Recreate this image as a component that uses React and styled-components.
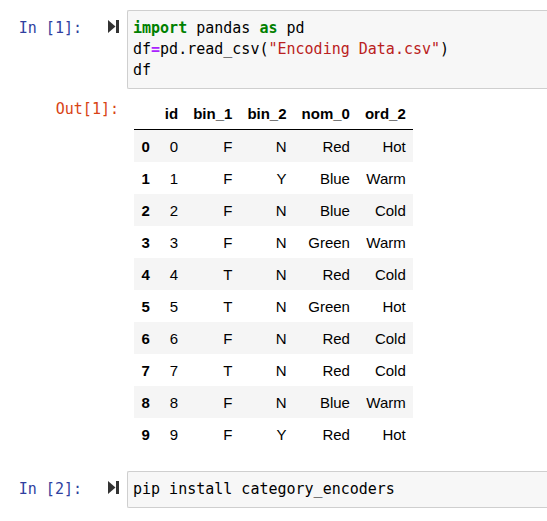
import React from "react";
import styled, { createGlobalStyle } from "styled-components";

const Global = createGlobalStyle`
  html, body { margin: 0; padding: 0; background: #fff; overflow: hidden; }
  body { width: 547px; height: 521px; }
`;

const Notebook = styled.div`
  width: 547px;
  padding-top: 10px;
  display: flex;
  flex-direction: column;
`;

const Cell = styled.div`
  display: flex;
  align-items: flex-start;
  margin-top: ${(p) => p.$mt || 0}px;
`;

const Prompt = styled.div`
  font-family: "DejaVu Sans Mono", monospace;
  font-size: 15px;
  line-height: 21px;
  color: ${(p) => (p.$out ? "#D84315" : "#303F9F")};
  width: ${(p) => p.$w}px;
  text-align: right;
  padding-top: ${(p) => p.$pt || 0}px;
  padding-right: ${(p) => p.$pr || 0}px;
  box-sizing: border-box;
  flex: none;
  white-space: pre;
`;

const RunButton = styled.div`
  flex: none;
  width: 45px;
  padding-left: 26px;
  padding-top: 10px;
  box-sizing: border-box;
  display: flex;
`;

const CodeBox = styled.div`
  flex: 1;
  min-width: 0;
  background: #f7f7f7;
  border: 1px solid #cfcfcf;
  border-right: none;
  border-radius: 2px 0 0 2px;
  padding: 7px 5px;
  font-family: "DejaVu Sans Mono", monospace;
  font-size: 15px;
  line-height: 21px;
  color: #000;
  white-space: pre;
  overflow: hidden;
`;

const Kw = styled.span`
  color: #008000;
  font-weight: bold;
`;
const Op = styled.span`
  color: #aa22ff;
  font-weight: bold;
`;
const Str = styled.span`
  color: #ba2121;
`;

const Output = styled.div`
  display: flex;
  align-items: flex-start;
  margin-top: 8px;
`;

const Table = styled.table`
  margin-left: 7px;
  border-collapse: collapse;
  border-spacing: 0;
  font-family: "Liberation Sans", Arial, sans-serif;
  font-size: 15px;
  color: #000;
`;

const Th = styled.th`
  text-align: right;
  font-weight: bold;
  padding: 7.5px 7.5px;
  line-height: 17px;
  vertical-align: middle;
`;

const Td = styled.td`
  text-align: right;
  padding: 7.5px 7.5px;
  line-height: 17px;
  vertical-align: middle;
`;

const HeadRow = styled.tr`
  border-bottom: 1px solid #000;
`;

const BodyRow = styled.tr`
  background: ${(p) => (p.$odd ? "#f5f5f5" : "#fff")};
`;

const StepIcon = () => (
  <svg width="11" height="13" viewBox="0 0 11 13">
    <polygon points="0,0 7.5,6.5 0,13" fill="#333" />
    <rect x="8" y="0" width="3" height="13" fill="#333" />
  </svg>
);

const rows = [
  [0, "F", "N", "Red", "Hot"],
  [1, "F", "Y", "Blue", "Warm"],
  [2, "F", "N", "Blue", "Cold"],
  [3, "F", "N", "Green", "Warm"],
  [4, "T", "N", "Red", "Cold"],
  [5, "T", "N", "Green", "Hot"],
  [6, "F", "N", "Red", "Cold"],
  [7, "T", "N", "Red", "Cold"],
  [8, "F", "N", "Blue", "Warm"],
  [9, "F", "Y", "Red", "Hot"],
];

export default function App() {
  return (
    <>
      <Global />
      <Notebook>
        <Cell>
          <Prompt $w={82} $pt={8}>In [1]:</Prompt>
          <RunButton>
            <StepIcon />
          </RunButton>
          <CodeBox>
            <Kw>import</Kw> pandas <Kw>as</Kw> pd{"\n"}df<Op>=</Op>pd.read_csv(
            <Str>"Encoding Data.csv"</Str>){"\n"}df
          </CodeBox>
        </Cell>
        <Output>
          <Prompt $out $w={127} $pr={8} $pt={2}>
            Out[1]:
          </Prompt>
          <Table>
            <thead>
              <HeadRow>
                <Th></Th>
                <Th>id</Th>
                <Th>bin_1</Th>
                <Th>bin_2</Th>
                <Th>nom_0</Th>
                <Th>ord_2</Th>
              </HeadRow>
            </thead>
            <tbody>
              {rows.map((r, i) => (
                <BodyRow key={i} $odd={i % 2 === 0}>
                  <Th>{r[0]}</Th>
                  {r.map((c, j) => (
                    <Td key={j}>{c}</Td>
                  ))}
                </BodyRow>
              ))}
            </tbody>
          </Table>
        </Output>
        <Cell $mt={21}>
          <Prompt $w={82} $pt={8}>In [2]:</Prompt>
          <RunButton>
            <StepIcon />
          </RunButton>
          <CodeBox>pip install category_encoders</CodeBox>
        </Cell>
      </Notebook>
    </>
  );
}
